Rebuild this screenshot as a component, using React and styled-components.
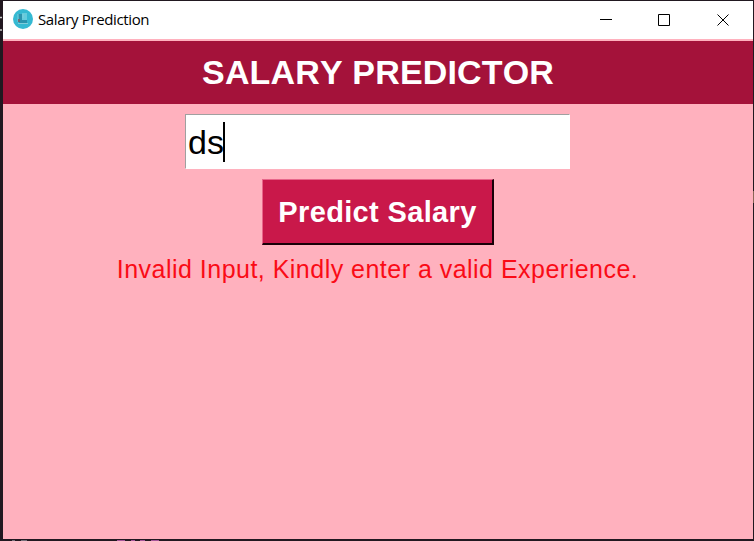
import React from 'react';
import styled, { createGlobalStyle } from 'styled-components';

const GlobalStyle = createGlobalStyle`
  html, body { margin: 0; padding: 0; overflow: hidden; background: #211820; }
  * { box-sizing: border-box; }
`;

const Desktop = styled.div`
  position: relative;
  width: 754px;
  height: 541px;
  padding: 1px 1px 2px 3px;
  background: #211820;
  overflow: hidden;
  font-family: "Liberation Sans", Arial, sans-serif;
`;

const Behind = styled.svg`
  position: absolute;
  inset: 0;
`;

const Window = styled.main`
  position: relative;
  width: 750px;
  height: 538px;
  display: flex;
  flex-direction: column;
  align-items: center;
  background: #ffb1be;
`;

const TitleBar = styled.header`
  width: 100%;
  height: 38px;
  flex: none;
  display: flex;
  align-items: center;
  padding: 0 1px 0 10px;
  background: #fff;
`;

const AppIcon = styled.svg`
  width: 20px;
  height: 20px;
  flex: none;
  margin-bottom: 2px;
`;

const Caption = styled.span`
  flex: 1;
  margin: 0 0 2px 5px;
  font: 15px/20px "Open Sans", sans-serif;
  letter-spacing: ${(p) => p.$tracking}px;
  color: #000;
  white-space: nowrap;
`;

const Controls = styled.div`
  display: flex;
  height: 100%;
`;

const ControlButton = styled.button`
  width: 58.5px;
  height: 38px;
  padding: 0;
  border: 0;
  display: flex;
  align-items: center;
  justify-content: center;
  background: transparent;
`;

const Heading = styled.h1`
  width: 100%;
  height: 63px;
  flex: none;
  margin: 2px 0 0;
  background: #a4123a;
  color: #fff;
  font-size: 34px;
  line-height: 62px;
  font-weight: 700;
  letter-spacing: 0.15px;
  font-kerning: none;
  text-align: center;
`;

const Entry = styled.div`
  width: 385px;
  height: 55px;
  flex: none;
  margin: 10px 1px 0 0;
  padding-left: 2px;
  display: flex;
  align-items: center;
  background: #fff;
  border: 1px solid;
  border-color: #a0a0a0 #fff #fff #a0a0a0;
  font-size: 34px;
  line-height: 50px;
  color: #000;
`;

const Caret = styled.i`
  width: 2px;
  height: 40px;
  margin-left: -1px;
  background: #000;
`;

const PredictButton = styled.button`
  width: 232px;
  height: 66px;
  flex: none;
  margin: 10px 0 0;
  padding: 2px 0 0;
  background: #c9184a;
  color: #fff;
  border: solid;
  border-width: 1px 2px 2px 1px;
  border-color: #e8668a #180008 #180008 #e8668a;
  font: 700 29px/61px "Liberation Sans", Arial, sans-serif;
  letter-spacing: 0.35px;
`;

const Message = styled.p`
  margin: 8px 1px 0 0;
  color: #fa0b16;
  font-size: 25px;
  line-height: 32px;
  letter-spacing: 0.48px;
  white-space: nowrap;
`;

const Glyph = ({ children }) => (
  <svg width="12" height="12" viewBox="0 0 12 12" fill="none" stroke="#000">{children}</svg>
);

export default function App() {
  return (
    <>
      <GlobalStyle />
      <Desktop>
        <Behind width="754" height="541" viewBox="0 0 754 541" fill="none">
          <path d="M0 17.5h2M0 30h2" stroke="#c8c8c8" strokeWidth="1.5" />
          <path d="M117 540.5h8M131 540.5h4M140 540.5h5M151 540.5h8" stroke="#a65799" />
          <path d="M12 540.5h3M21 540.5h6" stroke="#77717b" />
          <path d="M753.5 191v12" stroke="#8b6656" />
        </Behind>
        <Window>
          <TitleBar>
            <AppIcon viewBox="0 0 20 20">
              <circle cx="10" cy="10" r="10" fill="#35b9d2" />
              <path d="M5 5h4v5h5v4H6z" fill="#2b93ae" />
              <path d="M9 4h5v7H9z" fill="#65cbdc" />
              <path d="M5 14.5h10M5 5v8M10 5v4" stroke="#7fcddb" fill="none" />
              <path d="M5 10h2v3H5z" fill="#706b77" />
            </AppIcon>
            <Caption $tracking={-0.36}>Salary Prediction</Caption>
            <Controls>
              <ControlButton aria-label="Minimize"><Glyph><path d="M0 5.5h12" /></Glyph></ControlButton>
              <ControlButton aria-label="Maximize"><Glyph><path d="M.5.5h11v11H.5z" /></Glyph></ControlButton>
              <ControlButton aria-label="Close"><Glyph><path d="m.5.5 11 11m0-11-11 11" /></Glyph></ControlButton>
            </Controls>
          </TitleBar>
          <Heading>SALARY PREDICTOR</Heading>
          <Entry>ds<Caret /></Entry>
          <PredictButton>Predict Salary</PredictButton>
          <Message>Invalid Input, Kindly enter a valid Experience.</Message>
        </Window>
      </Desktop>
    </>
  );
}
